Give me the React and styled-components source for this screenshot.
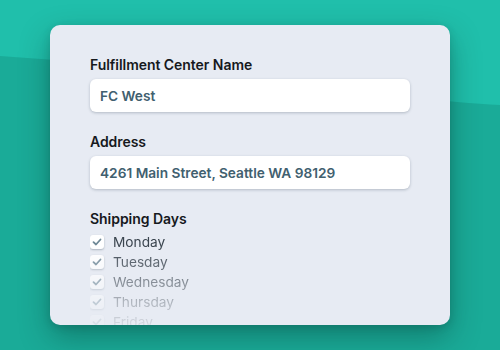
import React from "react";
import styled, { createGlobalStyle } from "styled-components";

const GlobalStyle = createGlobalStyle`
  html, body { margin: 0; padding: 0; }
  body { font-family: Inter, "Noto Sans", sans-serif; }
`;

const wave = encodeURIComponent(
  '<svg xmlns="http://www.w3.org/2000/svg" width="500" height="350" viewBox="0 0 500 350"><rect width="500" height="350" fill="#1aab98"/><path d="M0 0 H500 V105 C400 100 180 68 0 56 Z" fill="#20bfab"/></svg>'
);

const Scene = styled.div`
  width: 500px;
  height: 350px;
  overflow: hidden;
  box-sizing: border-box;
  padding-top: 25px;
  display: flex;
  justify-content: center;
  background: #1aab98 url("data:image/svg+xml,${wave}") no-repeat;
`;

const Card = styled.div`
  width: 400px;
  height: 300px;
  box-sizing: border-box;
  padding: 31px 40px 0;
  border-radius: 10px;
  overflow: hidden;
  background: #e7ebf3;
  box-shadow: 0 12px 30px rgba(0, 40, 35, 0.35), 0 2px 8px rgba(0, 0, 0, 0.12);
  display: flex;
  flex-direction: column;
`;

const Field = styled.div`
  display: flex;
  flex-direction: column;
  gap: 6px;
  margin-bottom: ${(p) => p.$mb ?? 21}px;
`;

const Label = styled.div`
  font-size: 14px;
  line-height: 17px;
  font-weight: 600;
  color: #16191d;
  letter-spacing: -0.05px;
`;

const Input = styled.div`
  height: 33px;
  box-sizing: border-box;
  padding: 0 10px;
  display: flex;
  align-items: center;
  background: #ffffff;
  border-radius: 6px;
  box-shadow: 0 1px 3px rgba(20, 40, 60, 0.25);
  font-size: 13.7px;
  font-weight: 600;
  color: #41606f;
`;

const List = styled.div`
  display: flex;
  flex-direction: column;
  margin-top: -1px;
  -webkit-mask-image: linear-gradient(to bottom, #000 0px, #000 12px, rgba(0,0,0,0.32) 70px, rgba(0,0,0,0.08) 95px);
  mask-image: linear-gradient(to bottom, #000 0px, #000 12px, rgba(0,0,0,0.32) 70px, rgba(0,0,0,0.08) 95px);
`;

const Row = styled.label`
  display: flex;
  align-items: center;
  gap: 9px;
  height: 20px;
  font-size: 13.7px;
  color: #3a444e;
`;

const Box = styled.span`
  width: 14px;
  height: 14px;
  border-radius: 3px;
  background: #fff;
  box-shadow: 0 1px 2px rgba(20, 40, 60, 0.3);
  display: flex;
  align-items: center;
  justify-content: center;
`;

const Check = () => (
  <svg width="10" height="10" viewBox="0 0 10 10">
    <polyline points="1.5,5.2 4,7.5 8.5,2.5" fill="none" stroke="#6e8896" strokeWidth="1.8" strokeLinecap="round" strokeLinejoin="round" />
  </svg>
);

const days = ["Monday", "Tuesday", "Wednesday", "Thursday", "Friday"];

export default function App() {
  return (
    <>
      <GlobalStyle />
      <Scene>
        <Card>
          <Field>
            <Label>Fulfillment Center Name</Label>
            <Input>FC West</Input>
          </Field>
          <Field>
            <Label>Address</Label>
            <Input>4261 Main Street, Seattle WA 98129</Input>
          </Field>
          <Field $mb={0}>
            <Label>Shipping Days</Label>
            <List>
              {days.map((d) => (
                <Row key={d}>
                  <Box><Check /></Box>
                  {d}
                </Row>
              ))}
            </List>
          </Field>
        </Card>
      </Scene>
    </>
  );
}
